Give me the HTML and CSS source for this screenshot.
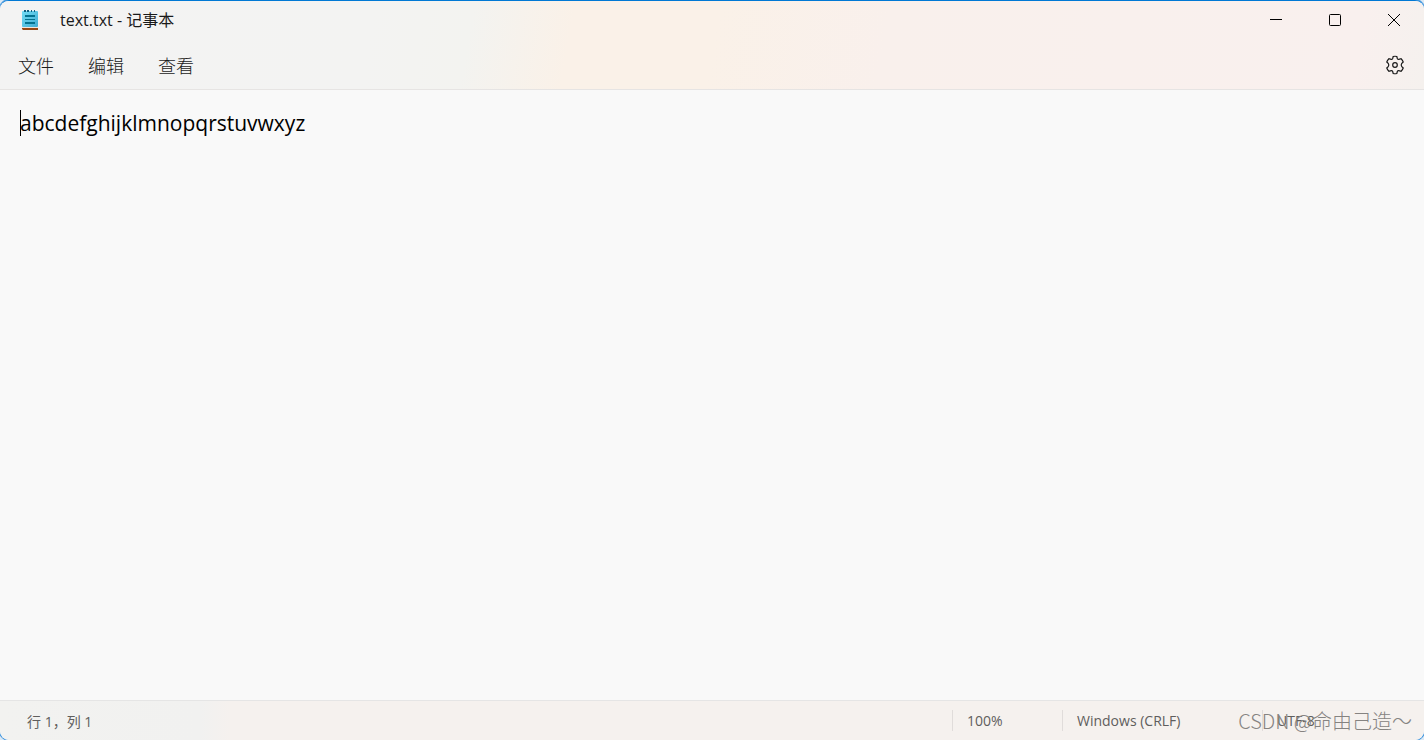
FILE: index.html
```html
<!DOCTYPE html>
<html lang="zh-CN">
<head>
  <meta charset="UTF-8">
  <title>text.txt - 记事本</title>
  <link rel="stylesheet" href="styles.css">
</head>
<body>
  <div class="window">
    <header class="top">
      <div class="titlebar">
        <svg class="app-icon" width="16" height="20" viewBox="0 0 16 20">
          <defs>
            <linearGradient id="pad" x1="0" y1="0" x2="1" y2="1">
              <stop offset="0" stop-color="#72dcf4"/>
              <stop offset="1" stop-color="#40acd3"/>
            </linearGradient>
          </defs>
          <path d="M0 17h16v3H1l-1-1z" fill="#964714"/>
          <path d="M0 17h16v1H0z" fill="#f3e4da"/>
          <rect y="1" width="16" height="16" rx="1" fill="url(#pad)"/>
          <path d="M2 0h2v2H2zM5 0h2v2H5zM9 0h1v2H9zM12 0h1v2h-1z" fill="#126080"/>
          <path d="M3 5h10v2H3zM3 9h10v1H3zM3 12h10v2H3z" fill="#04728f"/>
        </svg>
        <h1 class="title">text.txt - 记事本</h1>
        <div class="window-buttons">
          <button type="button" aria-label="最小化">
            <svg width="14" height="14" viewBox="0 0 14 14"><path d="M1 6.5h12"/></svg>
          </button>
          <button type="button" aria-label="最大化">
            <svg width="14" height="14" viewBox="0 0 14 14"><rect x="1.5" y="1.5" width="11" height="11" rx="1"/></svg>
          </button>
          <button type="button" aria-label="关闭">
            <svg width="14" height="14" viewBox="0 0 14 14"><path d="M1 1l12 12M13 1L1 13"/></svg>
          </button>
        </div>
      </div>
      <nav class="menubar">
        <button type="button">文件</button>
        <button type="button">编辑</button>
        <button type="button">查看</button>
        <button type="button" class="settings" aria-label="设置">
          <svg width="20" height="20" viewBox="0 0 20 20">
            <path d="M8.2 1.5Q10 1 11.8 1.5L12.4 3.7Q12.8 4.4 13.8 4.3L16.1 3.7Q17.7 5.2 18.2 7L16.6 8.7Q15.8 10 16.6 11.3L18.2 13Q17.7 14.8 16.1 16.3L13.8 15.7Q12.8 15.6 12.4 16.3L11.8 18.5Q10 19 8.2 18.5L7.6 16.3Q7.2 15.6 6.2 15.7L3.9 16.3Q2.3 14.8 1.8 13L3.4 11.3Q4.2 10 3.4 8.7L1.8 7Q2.3 5.2 3.9 3.7L6.2 4.3Q7.2 4.4 7.6 3.7Z"/>
            <circle cx="10" cy="10" r="2.3"/>
          </svg>
        </button>
      </nav>
    </header>

    <main class="editor">
      <span class="caret"></span>
      <textarea aria-label="文本编辑器" spellcheck="false">abcdefghijklmnopqrstuvwxyz</textarea>
    </main>

    <footer class="statusbar">
      <span class="position">行 1，列 1</span>
      <span class="cell zoom">100%</span>
      <span class="cell line-ending">Windows (CRLF)</span>
      <span class="cell encoding">UTF-8</span>
      <span class="watermark">CSDN @命由己造～</span>
    </footer>
  </div>
</body>
</html>
```

FILE: styles.css
```css
* {
  box-sizing: border-box;
}

body {
  margin: 0;
  background: #dce9f4;
  font-family: "Open Sans", "Noto Sans CJK SC", sans-serif;
  color: #1a1a1a;
}

.window {
  display: flex;
  flex-direction: column;
  height: 100vh;
  overflow: hidden;
  background: #f9f9f9;
  border-top: 1px solid #0078d4;
  border-radius: 9px;
  box-shadow: 0 0 0 1px #4a9be0;
}

button {
  padding: 0;
  border: none;
  background: none;
  color: inherit;
  font: inherit;
}

svg {
  display: block;
  fill: none;
  stroke: #1a1a1a;
}

.top {
  background: linear-gradient(100deg, #f3f3f3 0%, #f3f3f2 26%, #f3f3f0 33%, #faf1e8 40%, #faf1e8 50%, #f9f0ec 62%, #f9f0ee 95%, #f5f1ee 100%);
  border-bottom: 1px solid #e6e4e3;
}

.titlebar {
  display: flex;
  align-items: center;
  height: 37px;
  padding: 0 1px 0 22px;
}

.app-icon {
  stroke: none;
}

.title {
  margin: 0 0 0 22px;
  font-size: 16px;
  font-weight: 400;
  line-height: 24px;
}

.window-buttons {
  display: flex;
  margin-left: auto;
}

.window-buttons button {
  display: grid;
  place-items: center;
  width: 59px;
  height: 36px;
}

.window-buttons svg {
  stroke: #000;
}

.menubar {
  display: flex;
  align-items: center;
  gap: 34px;
  height: 51px;
  padding: 2px 19px 0 18px;
  font-size: 18px;
  font-weight: 300;
}

.menubar svg {
  stroke-width: 1.2;
}

.settings {
  margin-left: auto;
}

.editor {
  position: relative;
  display: flex;
  flex: 1;
  padding: 18px 20px;
}

.editor textarea {
  flex: 1;
  padding: 0;
  border: none;
  outline: none;
  resize: none;
  background: transparent;
  color: #000;
  font: 21px/30px "Open Sans", "Noto Sans CJK SC", sans-serif;
}

.caret {
  position: absolute;
  top: 20px;
  left: 20px;
  width: 1px;
  height: 26px;
  background: #000;
}

.statusbar {
  position: relative;
  display: flex;
  align-items: center;
  height: 40px;
  padding-left: 27px;
  background: linear-gradient(90deg, #f2f2f0 0, #f1f1f0 200px, #f5f1ee 230px);
  border-top: 1px solid #e5e5e5;
  color: #5f5e5d;
  font-size: 14px;
}

.position {
  margin-right: auto;
}

.cell {
  height: 21px;
  padding-left: 14px;
  border-left: 1px solid #e0dcda;
  line-height: 21px;
}

.zoom {
  width: 110px;
}

.line-ending {
  width: 200px;
}

.encoding {
  width: 162px;
}

.watermark {
  position: absolute;
  right: 12px;
  bottom: 4px;
  color: #858381;
  font: 300 20px/30px "Noto Sans CJK SC", sans-serif;
}
```
